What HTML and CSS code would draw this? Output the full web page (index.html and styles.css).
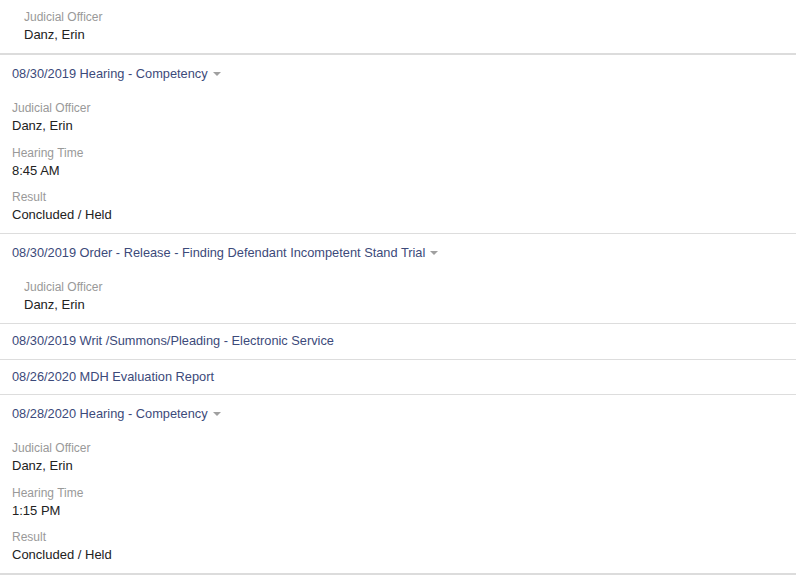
FILE: index.html
```html
<!DOCTYPE html>
<html>
<head>
<meta charset="utf-8">
<link rel="stylesheet" href="styles.css">
</head>
<body>
<div class="list">
  <div class="item first">
    <div class="details indent">
      <div class="field"><div class="label">Judicial Officer</div><div class="value">Danz, Erin</div></div>
    </div>
  </div>
  <div class="item thick">
    <div class="head"><a class="link">08/30/2019 Hearing - Competency</a><span class="caret"></span></div>
    <div class="details">
      <div class="field"><div class="label">Judicial Officer</div><div class="value">Danz, Erin</div></div>
      <div class="field"><div class="label">Hearing Time</div><div class="value">8:45 AM</div></div>
      <div class="field"><div class="label">Result</div><div class="value">Concluded / Held</div></div>
    </div>
  </div>
  <div class="item">
    <div class="head"><a class="link">08/30/2019 Order - Release - Finding Defendant Incompetent Stand Trial</a><span class="caret"></span></div>
    <div class="details indent">
      <div class="field"><div class="label">Judicial Officer</div><div class="value">Danz, Erin</div></div>
    </div>
  </div>
  <div class="item">
    <div class="head collapsed"><a class="link">08/30/2019 Writ /Summons/Pleading - Electronic Service</a></div>
  </div>
  <div class="item">
    <div class="head collapsed"><a class="link">08/26/2020 MDH Evaluation Report</a></div>
  </div>
  <div class="item last">
    <div class="head"><a class="link">08/28/2020 Hearing - Competency</a><span class="caret"></span></div>
    <div class="details">
      <div class="field"><div class="label">Judicial Officer</div><div class="value">Danz, Erin</div></div>
      <div class="field"><div class="label">Hearing Time</div><div class="value">1:15 PM</div></div>
      <div class="field"><div class="label">Result</div><div class="value">Concluded / Held</div></div>
    </div>
  </div>
</div>
</body>
</html>
```
FILE: styles.css
```css
html, body {
  margin: 0;
  padding: 0;
  background: #ffffff;
}
body {
  font-family: "Liberation Sans", Arial, sans-serif;
  font-size: 13px;
  color: #222222;
}
.list {
  display: flex;
  flex-direction: column;
}
.item {
  border-top: 1px solid #dddddd;
}
.item.first {
  border-top: none;
  padding-top: 9px;
}
.item.thick {
  border-top: 2px solid #dcdcdc;
}
.item.last {
  border-bottom: 2px solid #dcdcdc;
}
.head {
  padding: 11px 12px 0 12px;
  line-height: 16px;
  display: flex;
  align-items: center;
}
.head.collapsed {
  padding-top: 9px;
  padding-bottom: 9.5px;
}
.link {
  color: #3c4a7a;
  text-decoration: none;
  font-size: 12.8px;
}
.caret {
  display: inline-block;
  width: 0;
  height: 0;
  margin-left: 5px;
  border-top: 4px solid #a0a0a0;
  border-left: 4px solid transparent;
  border-right: 4px solid transparent;
}
.details {
  padding: 0 12px;
  margin-top: 18px;
}
.item.first .details {
  margin-top: 0;
}
.details.indent {
  padding-left: 24px;
}
.field {
  margin-bottom: 8.5px;
}
.field:last-child {
  margin-bottom: 8px;
}
.label {
  font-size: 12px;
  line-height: 16px;
  color: #999999;
}
.value {
  font-size: 13px;
  line-height: 20px;
  color: #222222;
}
```
